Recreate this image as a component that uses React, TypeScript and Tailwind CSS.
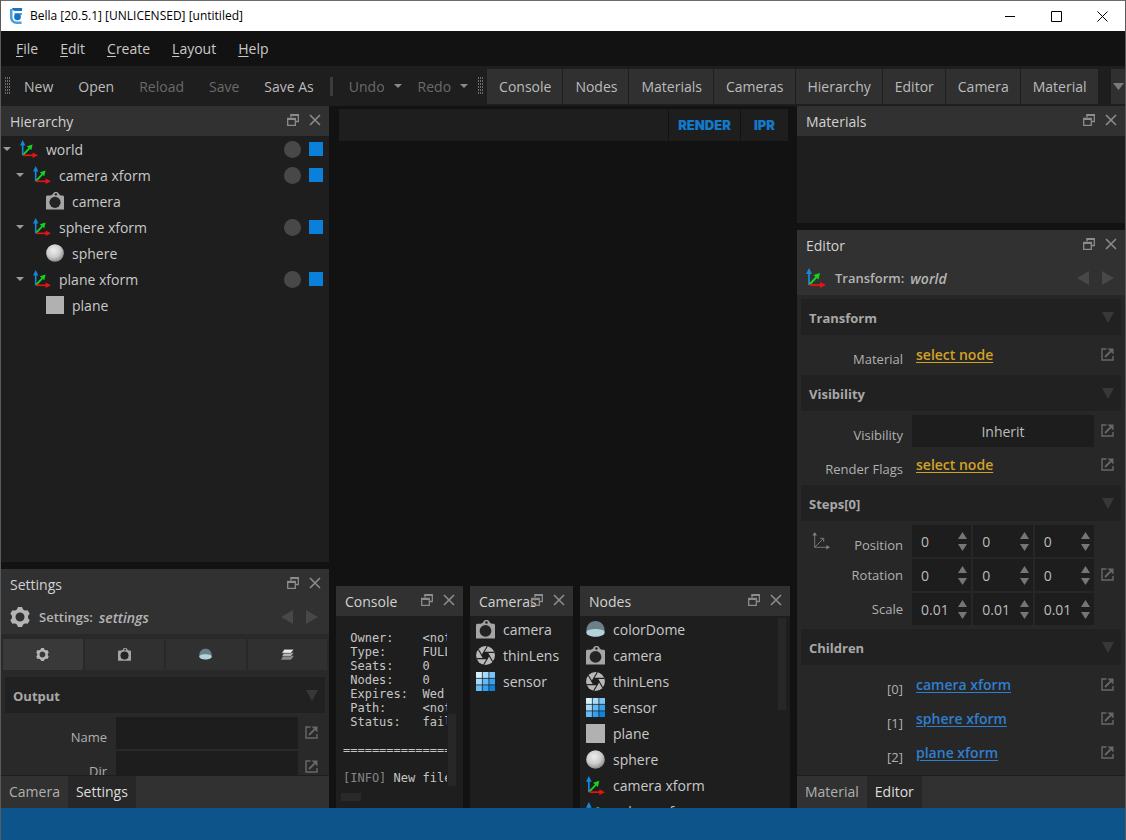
import React from "react";

type IconName =
  | "xform"
  | "camera"
  | "sphere"
  | "plane"
  | "dome"
  | "lens"
  | "sensor"
  | "gear"
  | "layers";

interface TreeNode {
  label: string;
  icon: IconName;
  depth: number;
}

const tree: TreeNode[] = [
  { label: "world", icon: "xform", depth: 0 },
  { label: "camera xform", icon: "xform", depth: 1 },
  { label: "camera", icon: "camera", depth: 2 },
  { label: "sphere xform", icon: "xform", depth: 1 },
  { label: "sphere", icon: "sphere", depth: 2 },
  { label: "plane xform", icon: "xform", depth: 1 },
  { label: "plane", icon: "plane", depth: 2 },
];

const indents = ["pl-0", "pl-[13px]", "pl-[26px]"];

const cameras: { label: string; icon: IconName }[] = [
  { label: "camera", icon: "camera" },
  { label: "thinLens", icon: "lens" },
  { label: "sensor", icon: "sensor" },
];

const nodes: { label: string; icon: IconName }[] = [
  { label: "colorDome", icon: "dome" },
  ...cameras,
  { label: "plane", icon: "plane" },
  { label: "sphere", icon: "sphere" },
  { label: "camera xform", icon: "xform" },
  { label: "sphere xform", icon: "xform" },
];

const consoleText = ` Owner:    <not set>
 Type:     FULL
 Seats:    0
 Nodes:    0
 Expires:  Wed Dec 31
 Path:     <not set>
 Status:   failed

==============================

`;

const Axes = ({ x, y, z }: { x: string; y: string; z: string }) => (
  <>
    <path d="M3 17V5" stroke={y} strokeWidth="1.8" />
    <path d="M3 0L6 6H0Z" fill={y} />
    <path d="M3.500 16.500L10.500 9" stroke={z} strokeWidth="2" />
    <path d="M14 5L12.500 11.500L7.500 7Z" fill={z} />
    <path d="M3.500 17H15" stroke={x} strokeWidth="1.800" />
    <path d="M20 17L14 20V14Z" fill={x} />
  </>
);

const sensorColors = [
  "#d8effc", "#a9dbfb", "#7cc5f8",
  "#a5d8fa", "#65b9f5", "#37a1ee",
  "#66baf5", "#339fee", "#0b84dd",
];

const Icon = ({ name, className }: { name: IconName; className: string }) => (
  <svg viewBox="0 0 20 20" fill="none" className={`shrink-0 ${className}`} aria-hidden="true">
    {name === "xform" && <Axes x="#e81313" y="#1587dc" z="#16d321" />}
    {name === "camera" && (
      <>
        <path d="M0 5L1 4H5L7.500 2.500C8 0.500 9.500 0 11 0S14 0.500 14.500 2.500L16.500 4H19L20 5V19.500H0Z" fill="#a5a5a5" />
        <circle cx="11" cy="2.600" r="1.300" fill="#1e1e1e" />
        <circle cx="10" cy="11.500" r="6.200" fill="#242424" />
      </>
    )}
    {name === "sphere" && (
      <>
        <defs>
          <radialGradient id="ball" cx="0.42" cy="0.35" r="0.65">
            <stop offset="0" stopColor="#eeeeee" />
            <stop offset="0.6" stopColor="#cccccc" />
            <stop offset="1" stopColor="#8c8c8c" />
          </radialGradient>
        </defs>
        <circle cx="10" cy="10" r="9.800" fill="url(#ball)" />
      </>
    )}
    {name === "plane" && <path d="M0 0H20V20H0Z" fill="#b1b1b1" />}
    {name === "dome" && (
      <>
        <path d="M0.300 12C0.300 5 4.500 1 10 1S19.700 5 19.700 12Z" fill="#6c8089" />
        <path d="M0.300 12.500C2 8.500 18 8.500 19.700 12.500C19.700 16 15 17.500 10 17.500S0.300 16 0.300 12.500Z" fill="#b2d3dc" />
      </>
    )}
    {name === "lens" && (
      <>
        <circle cx="10" cy="10" r="9.900" fill="#b9b9b9" />
        <path d="M13.800 10L11.900 13.290H8.100L6.200 10L8.100 6.710H11.900Z" fill="#1e1e1e" />
        {[0, 60, 120, 180, 240, 300].map((a) => (
          <path
            key={a}
            d="M13.800 10L8.100 19.870"
            stroke="#1e1e1e"
            strokeWidth="1.100"
            transform={`rotate(${a} 10 10)`}
          />
        ))}
      </>
    )}
    {name === "sensor" &&
      sensorColors.map((c, i) => (
        <rect key={i} x={(i % 3) * 7} y={Math.floor(i / 3) * 7} width="6.2" height="6.2" fill={c} />
      ))}
    {name === "gear" && (
      <>
        <circle cx="10" cy="10" r="6.300" stroke="#b5b5b5" strokeWidth="3.600" />
        {[0, 60, 120, 180, 240, 300].map((a) => (
          <path key={a} d="M6.500 3.500L8 0H12L13.500 3.500Z" fill="#b5b5b5" transform={`rotate(${a} 10 10)`} />
        ))}
      </>
    )}
    {name === "layers" && (
      <>
        <path d="M3 13L0 18H15L20 12H5Z" fill="#8a8a8a" />
        <path d="M4 8L1 13H15L20 7Z" fill="#b5b5b5" stroke="#292929" strokeWidth="0.800" />
        <path d="M5 2L1 8H15L20 2Z" fill="#ececec" stroke="#292929" strokeWidth="0.800" />
      </>
    )}
  </svg>
);

const Triangle = ({ dir, className }: { dir: "up" | "down" | "left" | "right"; className: string }) => {
  const paths = {
    up: "M0 10L5 0L10 10Z",
    down: "M0 0H10L5 10Z",
    left: "M10 0V10L0 5Z",
    right: "M0 0V10L10 5Z",
  };
  return (
    <svg viewBox="0 0 10 10" preserveAspectRatio="none" className={`shrink-0 ${className}`} aria-hidden="true">
      <path d={paths[dir]} fill="currentColor" />
    </svg>
  );
};

const Grip = () => (
  <svg viewBox="0 0 6 18" className="w-[6px] h-[18px] shrink-0" aria-hidden="true">
    {Array.from({ length: 18 }, (_, i) => (
      <rect key={i} x={(i % 3) * 2} y={Math.floor(i / 3) * 3} width="1" height="2" fill="#6c6c6c" />
    ))}
  </svg>
);

const LinkButton = ({ label }: { label: string }) => (
  <button aria-label={label} className="ml-[7px] mr-[11px] mb-[2px] w-[13px] h-[13px] shrink-0">
    <svg viewBox="0 0 13 13" fill="none" className="w-[13px] h-[13px]">
      <path d="M5.500 1H1V12H12V8" stroke="#686868" strokeWidth="1.400" />
      <path d="M4 9L9.500 3.500" stroke="#686868" strokeWidth="1.800" />
      <path d="M6.500 0.500H12.500V6.500Z" fill="#686868" />
    </svg>
  </button>
);

const DockHeader = ({ title }: { title: string }) => (
  <div className="h-[30px] shrink-0 flex items-center gap-[10px] pl-[9px] pr-2 bg-[#313131] text-[#8c8c8c]">
    <h2 className="flex-1 min-w-0 pt-[2px] whitespace-nowrap text-[#d2d2d2]">{title}</h2>
    <button aria-label={`Float ${title}`} className="w-3 h-3 mb-[2px] shrink-0">
      <svg viewBox="0 0 12 12" fill="none" className="w-3 h-3">
        <path d="M4 3.500V0.700H11.300V7.500H9" stroke="currentColor" strokeWidth="1.300" />
        <path d="M3.500 1H11.500" stroke="currentColor" strokeWidth="2" />
        <path d="M0.700 4.500H8.300V11.300H0.700Z" stroke="currentColor" strokeWidth="1.300" />
        <path d="M0.500 5H8.500" stroke="currentColor" strokeWidth="2" />
      </svg>
    </button>
    <button aria-label={`Close ${title}`} className="w-3 h-3 mb-[2px] shrink-0">
      <svg viewBox="0 0 12 12" fill="none" className="w-3 h-3">
        <path d="M1 1L11 11M11 1L1 11" stroke="currentColor" strokeWidth="1.600" />
      </svg>
    </button>
  </div>
);

const NodeTitle = ({ icon, kind, name }: { icon: IconName; kind: string; name: string }) => (
  <div className="h-[35px] shrink-0 flex items-center pl-[9px] pr-[11px] bg-[#313131] text-[13px] font-semibold text-[#b4b4b4]">
    <Icon name={icon} className="w-5 h-5" />
    <span className="ml-[9px] pt-[2px]">{kind}:</span>
    <span className="ml-[6px] pt-[2px] flex-1 text-sm italic">{name}</span>
    <button aria-label="Previous node" className="text-[#484848]">
      <Triangle dir="left" className="w-3 h-[14px]" />
    </button>
    <button aria-label="Next node" className="ml-[13px] text-[#484848]">
      <Triangle dir="right" className="w-3 h-[14px]" />
    </button>
  </div>
);

const Section = ({ title, children }: { title: string; children: React.ReactNode }) => (
  <section>
    <button className="w-full px-1">
      <span className="h-9 flex items-center justify-between pl-2 pr-[7px] bg-[#212121] text-[13px] font-bold text-[#a8a8a8]">
        <span className="pt-[2px]">{title}</span>
        <Triangle dir="down" className="w-3 h-[11px] text-[#383838]" />
      </span>
    </button>
    <div className="py-1 flex flex-col gap-[2px]">{children}</div>
  </section>
);

interface RowProps {
  label: string;
  id?: string;
  centered?: boolean;
  axes?: boolean;
  link?: boolean;
  children: React.ReactNode;
}

const Row = ({ label, id, centered, axes, link = true, children }: RowProps) => (
  <div className="h-8 shrink-0 flex items-center">
    <div className="w-[106px] shrink-0 h-8 flex items-center justify-between pl-[15px] text-[13px] text-[#b0b0b0]">
      {axes ? (
        <svg viewBox="0 0 20 20" fill="none" className="w-[18px] h-[18px]" aria-hidden="true">
          <g stroke="#808080">
            <path d="M3 3V17H17M3 17L13 7M9 7H13V11" />
          </g>
          <path d="M3 0L5.500 4H0.500ZM20 17L16 19.500V14.500Z" fill="#808080" />
        </svg>
      ) : (
        <span />
      )}
      <label htmlFor={id} className={centered ? "" : "pt-2"}>
        {label}
      </label>
    </div>
    <div className="ml-[9px] flex-1 min-w-0 h-8 flex items-center">{children}</div>
    {link ? <LinkButton label={`Connect ${label}`} /> : <div className="w-[31px] shrink-0" />}
  </div>
);

const NodeLink = ({ children, blue }: { children: string; blue?: boolean }) => (
  <a
    href="#"
    className={`pl-1 text-sm font-semibold underline underline-offset-2 ${blue ? "text-[#2f7fcf]" : "text-[#d2a224]"}`}
  >
    {children}
  </a>
);

const Vector = ({ id, value }: { id: string; value: string }) => (
  <div className="flex-1 min-w-0 flex gap-[2px]">
    {["x", "y", "z"].map((axis, i) => (
      <div key={axis} className="h-8 flex-1 min-w-0 flex items-center bg-[#1d1d1d]">
        <input
          id={i === 0 ? id : undefined}
          aria-label={`${id} ${axis}`}
          defaultValue={value}
          className="flex-1 w-full min-w-0 pl-[9px] pt-[2px] bg-transparent text-sm text-[#bcbcbc] outline-none"
        />
        <div className="flex flex-col gap-[5px] pr-1 text-[#767676]">
          <button aria-label="Increase">
            <Triangle dir="up" className="block w-[9px] h-[7px]" />
          </button>
          <button aria-label="Decrease">
            <Triangle dir="down" className="block w-[9px] h-[7px]" />
          </button>
        </div>
      </div>
    ))}
  </div>
);

const DockTabs = ({ tabs, active }: { tabs: string[]; active: string }) => (
  <div className="h-[33px] shrink-0 flex bg-[#313131] border-t border-[#1e1e1e]">
    {tabs.map((tab) => (
      <button
        key={tab}
        className={`px-2 ${tab === active ? "bg-[#272727] text-[#dedede]" : "text-[#b0b0b0]"}`}
      >
        {tab}
      </button>
    ))}
  </div>
);

const NodeList = ({ items }: { items: { label: string; icon: IconName }[] }) => (
  <ul className="flex-1 min-w-0">
    {items.map((item) => (
      <li key={item.label} className="h-[26px] flex items-center gap-2 pl-[6px] whitespace-nowrap">
        <Icon name={item.icon} className="w-[19px] h-[19px]" />
        <span className="pt-[2px]">{item.label}</span>
      </li>
    ))}
  </ul>
);

const TitleBar = () => (
  <header className="h-[31px] shrink-0 flex items-center bg-white border-t border-[#6b6b6b] pl-[9px] text-black">
    <svg viewBox="0 0 13 17" fill="none" className="w-[13px] h-[17px]" aria-hidden="true">
      <path d="M0 1H2.500V9C2.500 12 4.500 13.500 7 13.500H11.500V16H7C2.500 16 0 13 0 9Z" fill="#4aa0dc" />
      <path d="M2 0H12V3H5C3.500 3 2.300 2 2 0Z" fill="#1c75c0" />
      <path d="M4.500 5H12V7H10.500V9.500H4.500Z" fill="#4aa0dc" />
      <circle cx="7.500" cy="9" r="3.300" fill="#1873c1" />
    </svg>
    <h1 className="ml-[7px] flex-1 text-[12px]">Bella [20.5.1] [UNLICENSED] [untitiled]</h1>
    <button aria-label="Minimize" className="w-[46px] h-full flex items-center justify-center">
      <svg viewBox="0 0 11 11" className="w-[11px] h-[11px]" stroke="#000">
        <path d="M0 5.500H10" />
      </svg>
    </button>
    <button aria-label="Maximize" className="w-[46px] h-full flex items-center justify-center">
      <svg viewBox="0 0 11 11" className="w-[11px] h-[11px]" stroke="#000" fill="none">
        <path d="M0.500 0.500H10.500V10.500H0.500Z" />
      </svg>
    </button>
    <button aria-label="Close" className="w-[46px] h-full flex items-center justify-center">
      <svg viewBox="0 0 11 11" className="w-[11px] h-[11px]" stroke="#000">
        <path d="M0.500 0.500L10.500 10.500M10.500 0.500L0.500 10.500" />
      </svg>
    </button>
  </header>
);

const MenuBar = () => (
  <nav className="h-[35px] shrink-0 flex items-center pl-1 bg-[#121212]">
    {["File", "Edit", "Create", "Layout", "Help"].map((item) => (
      <button key={item} className="px-[11px]">
        <span className="underline underline-offset-2">{item[0]}</span>
        {item.slice(1)}
      </button>
    ))}
  </nav>
);

const ToolBar = () => (
  <div className="h-10 shrink-0 flex items-center pl-1 bg-[#1e1e1e] text-[#bcbcbc] whitespace-nowrap">
    <Grip />
    <div className="flex gap-[1px] pl-[1px] pt-[2px]">
      {["New", "Open", "Reload", "Save", "Save As"].map((item) => (
        <button
          key={item}
          disabled={item === "Reload" || item === "Save"}
          className="px-3 disabled:text-[#6a6a6a]"
        >
          {item}
        </button>
      ))}
    </div>
    <div className="ml-1 w-[3px] h-[19px] bg-[#3c3c3c]" />
    <div className="flex items-center pl-4 pr-[10px] pt-[2px] gap-4 text-[#6a6a6a]">
      {["Undo", "Redo"].map((item) => (
        <button key={item} disabled className="flex items-center gap-[9px]">
          {item}
          <Triangle dir="down" className="w-2 h-1 mb-[2px] text-[#8a8a8a]" />
        </button>
      ))}
    </div>
    <Grip />
    <div className="flex flex-1 min-w-0 gap-[1px] pl-[3px]">
      {["Console", "Nodes", "Materials", "Cameras", "Hierarchy", "Editor", "Camera", "Material"].map(
        (item) => (
          <button key={item} className="h-[35px] pl-3 pr-[11px] pt-[2px] bg-[#303030]">
            {item}
          </button>
        )
      )}
    </div>
    <button aria-label="More" className="w-[14px] h-[35px] flex items-center justify-center bg-[#303030]">
      <Triangle dir="down" className="w-[11px] h-[7px] text-[#7b7b7b]" />
    </button>
  </div>
);

const HierarchyDock = () => (
  <section className="flex-1 min-h-0 flex flex-col bg-[#1e1e1e]">
    <DockHeader title="Hierarchy" />
    <ul>
      {tree.map((node, i) => (
        <li key={i} className="h-[26px] flex items-center pr-[6px]">
          <div className={`flex-1 flex items-center ${indents[node.depth]}`}>
            <span className="w-[19px] pl-[2px]">
              {node.icon === "xform" && <Triangle dir="down" className="w-2 h-1 text-[#9a9a9a]" />}
            </span>
            <Icon name={node.icon} className="w-[18px] h-[18px]" />
            <span className="ml-2 pt-[2px]">{node.label}</span>
          </div>
          {node.icon === "xform" && (
            <>
              <button aria-label={`Solo ${node.label}`} className="w-[17px] h-[17px] rounded-full bg-[#484848]" />
              <button aria-label={`Show ${node.label}`} className="ml-2 w-[14px] h-[14px] bg-[#0a80da]" />
            </>
          )}
        </li>
      ))}
    </ul>
  </section>
);

const SettingsDock = () => (
  <section className="h-[239px] shrink-0 flex flex-col bg-[#292929]">
    <DockHeader title="Settings" />
    <NodeTitle icon="gear" kind="Settings" name="settings" />
    <div className="mt-[5px] px-[2px] flex gap-[2px] shrink-0">
      {(["gear", "camera", "dome", "layers"] as IconName[]).map((icon, i) => (
        <button
          key={icon}
          aria-label={icon}
          className={`h-[31px] flex-1 flex items-center justify-center ${i === 0 ? "bg-[#393939]" : "bg-[#303030]"}`}
        >
          <Icon name={icon} className="w-[13px] h-[13px]" />
        </button>
      ))}
    </div>
    <div className="mt-[7px] flex-1 min-h-0 overflow-hidden">
      <Section title="Output">
        {["Name", "Dir"].map((field) => (
          <Row key={field} label={field} id={field}>
            <input id={field} className="w-full h-8 px-2 bg-[#1d1d1d] outline-none" />
          </Row>
        ))}
      </Section>
    </div>
    <DockTabs tabs={["Camera", "Settings"]} active="Settings" />
  </section>
);

const Viewport = () => (
  <section className="flex-1 min-h-0 pt-[3px] pl-[3px] pr-[2px]">
    <div className="h-8 flex gap-[1px] font-['Inter',sans-serif] font-black text-[13px] text-[#1279cb]">
      <div className="flex-1 bg-[#1e1e1e]" />
      <button className="w-[71px] bg-[#1e1e1e]">RENDER</button>
      <button className="w-[47px] bg-[#1e1e1e]">IPR</button>
    </div>
  </section>
);

const ConsoleDock = () => (
  <section className="flex flex-col min-w-0 min-h-0 bg-[#1e1e1e]">
    <DockHeader title="Console" />
    <div className="flex-1 min-h-0 flex pt-[15px] pl-[7px] pr-[7px]">
      <pre className="flex-1 min-w-0 overflow-hidden font-['DejaVu_Sans_Mono',monospace] text-[12px] leading-[14px] text-[#c6c6c6]">
        {consoleText}
        <span className="text-[#858585]">[INFO]</span> New file
      </pre>
      <div className="ml-[1px] mt-[83px] w-2 h-[72px] bg-[#272727]" />
    </div>
    <div className="ml-[5px] mb-[7px] w-5 h-2 shrink-0 bg-[#292929]" />
  </section>
);

const EditorDock = () => (
  <section className="flex-1 min-h-0 flex flex-col bg-[#272727]">
    <DockHeader title="Editor" />
    <NodeTitle icon="xform" kind="Transform" name="world" />
    <div className="pt-1 flex-1 min-h-0 overflow-hidden">
      <Section title="Transform">
        <Row label="Material">
          <NodeLink>select node</NodeLink>
        </Row>
      </Section>
      <Section title="Visibility">
        <Row label="Visibility" id="visibility">
          <select
            id="visibility"
            className="w-full h-8 pt-[2px] appearance-none bg-[#1d1d1d] text-sm text-[#bcbcbc] [text-align-last:center]"
          >
            <option>Inherit</option>
          </select>
        </Row>
        <Row label="Render Flags">
          <NodeLink>select node</NodeLink>
        </Row>
      </Section>
      <Section title="Steps[0]">
        <Row label="Position" id="position" axes link={false}>
          <Vector id="position" value="0" />
        </Row>
        <Row label="Rotation" id="rotation" centered>
          <Vector id="rotation" value="0" />
        </Row>
        <Row label="Scale" id="scale" centered link={false}>
          <Vector id="scale" value="0.01" />
        </Row>
      </Section>
      <Section title="Children">
        {["camera xform", "sphere xform", "plane xform"].map((child, i) => (
          <Row key={child} label={`[${i}]`}>
            <NodeLink blue>{child}</NodeLink>
          </Row>
        ))}
      </Section>
    </div>
    <DockTabs tabs={["Material", "Editor"]} active="Editor" />
  </section>
);

const App: React.FC = () => {
  return (
    <div className="h-screen flex flex-col overflow-hidden bg-[#121212] border-x border-[#5a5a5a] font-['Open_Sans',sans-serif] text-sm text-[#c9c9c9]">
      <TitleBar />
      <MenuBar />
      <ToolBar />
      <main className="flex-1 min-h-0 grid grid-cols-[minmax(0,328fr)_minmax(0,468fr)_minmax(0,328fr)] grid-rows-[minmax(0,1fr)]">
        <div className="flex flex-col gap-[7px] min-h-0">
          <HierarchyDock />
          <SettingsDock />
        </div>
        <div className="flex flex-col min-h-0 px-[7px]">
          <Viewport />
          <div className="h-[222px] shrink-0 grid grid-cols-[127fr_103fr_210fr] grid-rows-[minmax(0,1fr)] gap-[7px]">
            <ConsoleDock />
            <section className="flex flex-col min-w-0 bg-[#1e1e1e]">
              <DockHeader title="Cameras" />
              <NodeList items={cameras} />
            </section>
            <section className="flex flex-col min-w-0 min-h-0 bg-[#1e1e1e]">
              <DockHeader title="Nodes" />
              <div className="flex-1 min-h-0 overflow-hidden flex">
                <NodeList items={nodes} />
                <div className="mt-[2px] mr-1 w-2 h-[92px] bg-[#272727]" />
              </div>
            </section>
          </div>
        </div>
        <div className="flex flex-col gap-[7px] min-h-0">
          <section className="h-[117px] shrink-0 bg-[#1e1e1e]">
            <DockHeader title="Materials" />
          </section>
          <EditorDock />
        </div>
      </main>
      <footer className="h-8 shrink-0 bg-[#0c5489]" />
    </div>
  );
};

export default App;
